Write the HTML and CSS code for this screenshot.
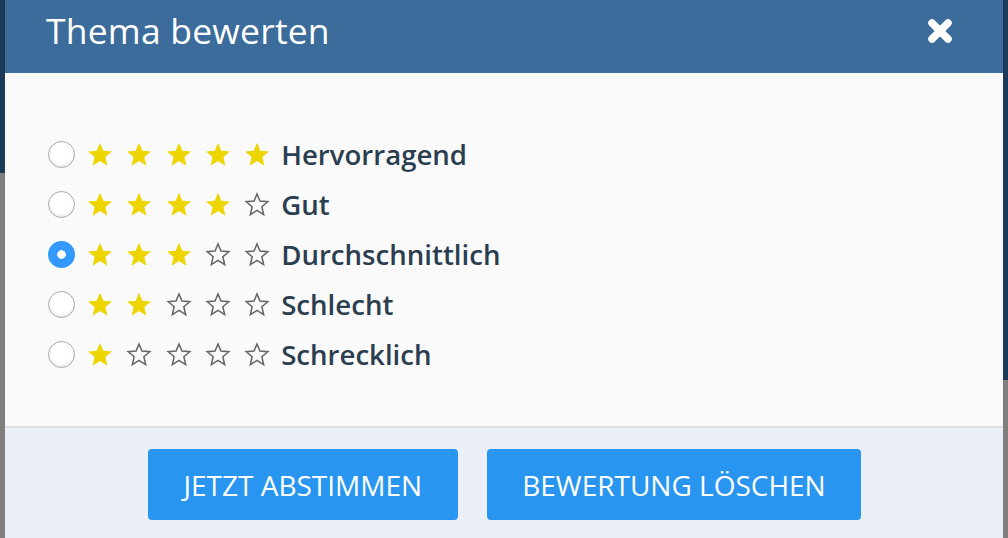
FILE: index.html
```html
<!DOCTYPE html>
<html lang="de">
<head>
    <meta charset="UTF-8">
    <meta name="viewport" content="width=device-width, initial-scale=1.0">
    <title>Thema bewerten</title>
    <link rel="stylesheet" href="styles.css">
</head>
<body>
<div class="edge edge-left"></div>
<div class="modal">
    <div class="modal-header">
        <h1>Thema bewerten</h1>
        <button class="close-btn" aria-label="Schließen">
            <svg width="26" height="26" viewBox="0 0 26 26">
                <path d="M5 5 L21 21 M21 5 L5 21" stroke="#fff" stroke-width="7.5" stroke-linecap="round"/>
            </svg>
        </button>
    </div>

    <div class="modal-body">
        <label class="rating-row">
            <input type="radio" name="rating" value="5">
            <span class="stars" data-value="5"></span>
            <span class="rating-label">Hervorragend</span>
        </label>
        <label class="rating-row">
            <input type="radio" name="rating" value="4">
            <span class="stars" data-value="4"></span>
            <span class="rating-label">Gut</span>
        </label>
        <label class="rating-row">
            <input type="radio" name="rating" value="3" checked>
            <span class="stars" data-value="3"></span>
            <span class="rating-label">Durchschnittlich</span>
        </label>
        <label class="rating-row">
            <input type="radio" name="rating" value="2">
            <span class="stars" data-value="2"></span>
            <span class="rating-label">Schlecht</span>
        </label>
        <label class="rating-row">
            <input type="radio" name="rating" value="1">
            <span class="stars" data-value="1"></span>
            <span class="rating-label">Schrecklich</span>
        </label>
    </div>

    <div class="modal-footer">
        <button class="btn">Jetzt abstimmen</button>
        <button class="btn">Bewertung löschen</button>
    </div>
</div>
<div class="edge edge-right"></div>

<script>
    const starPoints = '13,0.8 16.3,8.7 25,9.4 18.4,15 20.4,23.8 13,19.1 5.6,23.8 7.6,15 1,9.4 9.7,8.7';

    function drawStars(el) {
        const value = parseInt(el.dataset.value, 10);
        let html = '';
        for (let i = 1; i <= 5; i++) {
            const cls = i <= value ? 'star full' : 'star empty';
            html += `<svg class="${cls}" width="26" height="25" viewBox="0 0 26 25"><polygon points="${starPoints}"/></svg>`;
        }
        el.innerHTML = html;
    }

    document.querySelectorAll('.stars').forEach(drawStars);
</script>
</body>
</html>
```

FILE: styles.css
```css
html, body {
    margin: 0;
    height: 100%;
}
body {
    display: flex;
    font-family: "Open Sans", Arial, sans-serif;
    overflow: hidden;
}
.edge {
    width: 5px;
    flex-shrink: 0;
}
.edge-left {
    background: linear-gradient(#1b3a5a 0, #1b3a5a 173px, #7f7f7f 173px);
}
.edge-right {
    background: linear-gradient(#1b3a5a 0, #1b3a5a 380px, #7f7f7f 380px);
}
.modal {
    flex: 1;
    display: flex;
    flex-direction: column;
    background-color: #fafafa;
}
.modal-header {
    height: 73px;
    background-color: #3b6c9b;
    display: flex;
    align-items: center;
    justify-content: space-between;
    padding: 0 50px 0 41px;
    box-sizing: border-box;
}
.modal-header h1 {
    margin: 0 0 14px;
    font-size: 35.5px;
    font-weight: 400;
    color: #fff;
    letter-spacing: 0.2px;
}
.close-btn {
    background: none;
    border: none;
    padding: 0;
    margin-bottom: 12px;
    display: flex;
    cursor: pointer;
}
.modal-body {
    display: flex;
    flex-direction: column;
    padding: 56px 0 47px 43px;
    border-bottom: 2px solid #dedfe1;
}
.rating-row {
    display: flex;
    align-items: center;
    height: 50px;
    cursor: pointer;
}
.rating-row input {
    appearance: none;
    -webkit-appearance: none;
    width: 27px;
    height: 27px;
    margin: 0 12px 0 0;
    border-radius: 50%;
    border: 1px solid #a8a8a8;
    background: #fff;
    box-shadow: inset 0 -2px 3px rgba(0, 0, 0, 0.08);
    box-sizing: border-box;
}
.rating-row input:checked {
    border: none;
    background: radial-gradient(circle, #fff 0, #fff 4px, #3399ff 4.6px);
    box-shadow: none;
}
.stars {
    display: flex;
    gap: 13.3px;
    margin-right: 11px;
}
.star.full polygon {
    fill: #ecd500;
}
.star.empty polygon {
    fill: none;
    stroke: #666;
    stroke-width: 1.7;
    transform: scale(0.9);
    transform-origin: 13px 12.5px;
}
.rating-label {
    font-size: 27.6px;
    font-weight: 600;
    color: #2b3e50;
}
.modal-footer {
    flex: 1;
    background-color: #ebf0f8;
    display: flex;
    padding: 21px 0 0 143px;
    gap: 29px;
    align-items: flex-start;
}
.btn {
    height: 71px;
    padding: 0 35.5px;
    border: none;
    border-radius: 4px;
    background-color: #2896f0;
    color: #fff;
    font-family: "Open Sans", Arial, sans-serif;
    font-size: 28px;
    font-weight: 400;
    text-transform: uppercase;
    cursor: pointer;
}
```
